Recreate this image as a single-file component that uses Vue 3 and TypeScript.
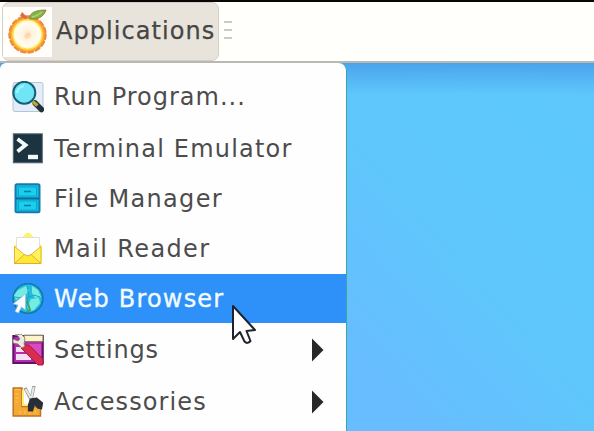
<script setup lang="ts">
interface Item {
  id: string
  label: string
  submenu?: boolean
}

const items: Item[] = [
  { id: 'run', label: 'Run Program...' },
  { id: 'terminal', label: 'Terminal Emulator' },
  { id: 'files', label: 'File Manager' },
  { id: 'mail', label: 'Mail Reader' },
  { id: 'web', label: 'Web Browser' },
  { id: 'settings', label: 'Settings', submenu: true },
  { id: 'accessories', label: 'Accessories', submenu: true },
]
</script>

<template>
  <div class="desktop">
    <header class="panel">
      <button class="launcher">
        <span class="logo">
          <svg width="49" height="50" viewBox="0 0 49 50">
            <defs>
              <radialGradient id="fruit">
                <stop offset="0" stop-color="#ffdfb8" />
                <stop offset=".3" stop-color="#fff3e0" />
                <stop offset=".7" stop-color="#fffdf0" />
                <stop offset="1" stop-color="#fff3a0" />
              </radialGradient>
            </defs>
            <circle cx="24.5" cy="27.5" r="16.5" fill="url(#fruit)" stroke="#f9ae35" stroke-width="3.4" />
            <circle cx="24.5" cy="27.5" r="18" fill="none" stroke="#ef8b3c" stroke-width="2.4" stroke-linecap="round" stroke-dasharray="4.4 3.14" />
            <circle cx="24.5" cy="27.5" r="14.6" fill="none" stroke="#ffe04b" stroke-width="1.4" />
            <path d="M22 28l3-3 3 2-1 4-4 1-2-3z" fill="#ffd0a0" opacity=".65" />
            <path d="M25 11l-6-6-2 4 5 3z" fill="#d96d42" />
            <path d="M26 11c2-6 7-8 17-8-2 6-7 10-16 9z" fill="#79b94b" stroke="#a06b3c" stroke-width=".8" />
            <path d="M29 10c4-1 7-2 10-5" fill="none" stroke="#b2d65b" stroke-width="1.3" />
          </svg>
        </span>
        <span class="launcher-text">Applications</span>
      </button>
      <span class="grip"><i /><i /><i /></span>
    </header>

    <nav class="menu">
      <div v-for="item in items" :key="item.id" class="row" :class="item.id">
        <svg class="icon" width="32" height="32" viewBox="0 0 32 32">
          <g v-if="item.id === 'run'">
            <rect x="1" y="1.5" width="30" height="29" rx="2" fill="#e3edf9" stroke="#b5c5d7" />
            <path d="M23 22l6.5 6.5" stroke="#233238" stroke-width="5.5" stroke-linecap="round" />
            <path d="M20.5 20.5l5 4" stroke="#b5ac35" stroke-width="3.5" />
            <circle cx="12.3" cy="11.8" r="11" fill="#6fe5f7" stroke="#175f70" stroke-width="2" />
            <path d="M5 12a8 8 0 0 1 7-7" fill="none" stroke="#a2f7fb" stroke-width="2" />
          </g>
          <g v-else-if="item.id === 'terminal'">
            <rect x="1.3" y=".8" width="29" height="29" fill="#1c3440" stroke="#526975" />
            <path d="M5.5 6l8 6-8 6.5" fill="none" stroke="#f4fafa" stroke-width="3.8" />
            <path d="M16 24h10" stroke="#f4fafa" stroke-width="4.4" />
          </g>
          <g v-else-if="item.id === 'files'">
            <rect x="3.5" y="1.3" width="24" height="28" rx="1.5" fill="#13bde0" stroke="#147bae" stroke-width="2" />
            <rect x="6.5" y="4" width="18" height="9" fill="#19cff0" stroke="#13a4ca" />
            <rect x="6.5" y="18" width="18" height="9" fill="#19cff0" stroke="#13a4ca" />
            <path d="M4 15.5h23" stroke="#096c95" stroke-width="2" />
            <path d="M12 8.5h7M12 22.5h7" stroke="#087b9f" stroke-width="1.6" />
          </g>
          <g v-else-if="item.id === 'mail'">
            <path d="M2 13L13 1.3q3-3 6 0L30 13v17H2z" fill="#fff45b" />
            <path d="M4.5 4.5h23v18h-23z" fill="#fffffd" stroke="#dfdfe6" />
            <path d="M2.5 13.5l11 9-11 8zM29 13.5l-11 9 11 8z" fill="#fff25d" stroke="#e7b532" />
            <path d="M2.5 30.5l10-9q3.2 3 6.5 0l10 9z" fill="#ffe935" stroke="#dfad37" />
          </g>
          <g v-else-if="item.id === 'web'">
            <circle cx="16" cy="15.5" r="14.8" fill="#22bde0" stroke="#147aae" stroke-width="1.8" />
            <path d="M6 7l8-4 3 4-4 6-5 1-4 3-2-5zM20 3l6 4 3 7-6 1-3-5zM19 16l8-1 1 5-6 7-6 2-1-5z" fill="#75ebe3" />
            <path d="M15 3l2 10-4 8 4 8M3 14l9 2 10-4 6 2" fill="none" stroke="#22a5b9" />
            <path d="M15 18l3 9-3 2" fill="none" stroke="#39a569" stroke-width="2" />
            <path d="M13.5 11v16l-4-3-3 6-3.5-1.5L6 22l-5-1z" fill="#f7faff" stroke="#9fb5d5" stroke-width=".6" />
          </g>
          <g v-else-if="item.id === 'settings'">
            <rect x="1.3" y="2" width="29.5" height="27" fill="#b22fb1" stroke="#631067" stroke-width="2" />
            <path d="M12 1.2h19v6.5H12z" fill="#fff3c7" stroke="#7d6958" />
            <path d="M4 13h9v5H4zM4 20h15v6H4z" fill="#f4dff3" />
            <path d="M14 10h15v13z" fill="#d84bbd" />
            <path d="M11 11h6l14 14v6h-5L9 14z" fill="#d82c51" stroke="#a81b45" />
            <path d="M3 1l6-1 4 4-1 6 1 2-3 2-4-4-5-1V5l5 2 2-2-2-3z" fill="#edebdf" stroke="#81796e" stroke-width=".8" />
          </g>
          <g v-else>
            <path d="M1.2 2H10v18.5h18.5V30H1.2z" fill="#f4a934" stroke="#bf7128" stroke-width="1.5" />
            <path d="M3 3.5h5.5M3 8h3M3 12h4M3 16h3M8 28v-3M13 28v-4M18 28v-3M23 28v-4" stroke="#ffc54a" />
            <path d="M11 4v15h8" fill="none" stroke="#ffef75" stroke-width="2" />
            <path d="M13 2l9 17M22 0l-4 19" stroke="#8d928d" stroke-width="3.2" />
            <path d="M13.5 3l7.5 13M21.7 1l-3 15" stroke="#e8ece7" stroke-width="2" />
            <path d="M18.5 13l6-1 6 5-1 6-4-1-3-4-2 7h-4v-6z" fill="#282e38" stroke="#282e38" stroke-linejoin="round" stroke-width="1.2" />
          </g>
        </svg>
        <span class="label">{{ item.label }}</span>
        <svg v-if="item.submenu" class="chevron" width="12" height="24" viewBox="0 0 12 24">
          <path d="M0 .5L11.5 12 0 23.5z" fill="#282828" />
        </svg>
      </div>
    </nav>

    <svg class="pointer" width="27" height="42" viewBox="0 0 27 42">
      <path d="M2 2v33l7-7 4.5 9.5q3 3 6-.5L15.5 27l8.5-1z" fill="#fff" stroke="#20232d" stroke-width="2" stroke-linejoin="round" />
    </svg>
  </div>
</template>

<style>
body {
  overflow: hidden;
}
</style>

<style scoped>
.desktop {
  position: relative;
  width: 594px;
  height: 431px;
  overflow: hidden;
  box-sizing: border-box;
  font-family: "DejaVu Sans", sans-serif;
  font-size: 24px;
  color: #4c4c4c;
  background:
    linear-gradient(180deg, rgba(65, 145, 229, .65) 63px, rgba(75, 155, 235, 0) 94px),
    linear-gradient(48deg, #68bbff 0%, #67bdff 44%, #5fc6fb 62%, #5dc8fb 84%, #60c4fc 100%);
}
.panel {
  display: flex;
  box-sizing: border-box;
  height: 63px;
  border-top: 2px solid #080706;
  border-bottom: 2px solid #bab8b2;
  background: #fffffb;
}
.launcher {
  display: flex;
  align-items: center;
  box-sizing: border-box;
  width: 217px;
  height: 59px;
  margin: 0 0 0 2px;
  padding: 0;
  border: 1px solid #d3cfc7;
  border-radius: 7px;
  background: #e8e4dc;
  color: #464644;
  font: inherit;
}
.logo {
  display: flex;
  width: 49px;
  height: 50px;
  background: #fffefa;
}
.launcher-text {
  margin-left: 4px;
  line-height: 54px;
  padding-bottom: 1px;
  letter-spacing: 1.05px;
  white-space: nowrap;
  -webkit-text-stroke: .25px currentColor;
}
.grip {
  display: flex;
  flex-direction: column;
  gap: 6px;
  padding: 19px 0 0 5px;
}
.grip i {
  width: 8px;
  height: 2px;
  background: #cbcac6;
}
.menu {
  box-sizing: border-box;
  width: 347px;
  height: 368px;
  padding-top: 8px;
  border-right: 1px solid #38a8a5;
  border-radius: 6px 8px 0 0;
  background: #fffefe;
}
.row {
  display: flex;
  align-items: center;
  box-sizing: border-box;
  height: 50px;
  padding: 0 22px 0 12px;
  letter-spacing: 1.1px;
}
.row.run {
  height: 52px;
  letter-spacing: 1px;
}
.row.terminal {
  height: 51px;
  letter-spacing: 1.2px;
}
.row.files {
  height: 49px;
  letter-spacing: 1.33px;
}
.row.mail {
  height: 51px;
  letter-spacing: 1.38px;
}
.row.web {
  height: 49px;
  letter-spacing: 1.2px;
  background: #2e91fa;
  color: #f2fbff;
}
.row.settings {
  height: 54px;
  letter-spacing: .8px;
}
.icon {
  flex: none;
}
.label {
  flex: 1;
  margin-left: 10px;
  line-height: 50px;
  white-space: nowrap;
}
.web .label {
  -webkit-text-stroke: .35px currentColor;
}
.chevron {
  flex: none;
}
.pointer {
  position: absolute;
  left: 231px;
  top: 304px;
}
</style>
